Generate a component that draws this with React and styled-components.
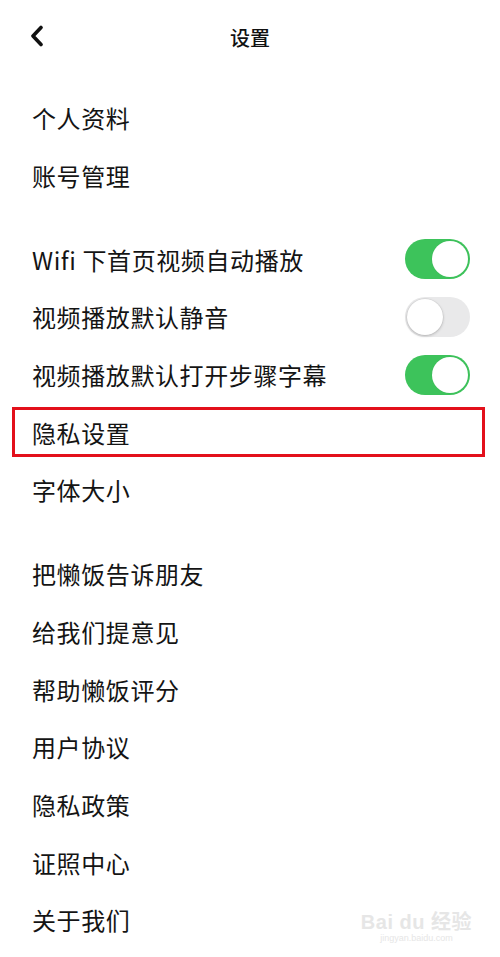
import React from 'react';
import styled, { createGlobalStyle } from 'styled-components';

const Global = createGlobalStyle`
  html, body {
    margin: 0;
    padding: 0;
    background: #fff;
  }
  body {
    font-family: 'Noto Sans CJK SC', 'Noto Sans', sans-serif;
    color: #111;
  }
`;

const Page = styled.div`
  position: relative;
  width: 500px;
  height: 957px;
  overflow: hidden;
  background: #fff;
`;

const Header = styled.div`
  height: 76px;
  display: flex;
  align-items: center;
  justify-content: center;
  position: relative;
`;

const BackButton = styled.div`
  position: absolute;
  left: 26px;
  top: 22px;
  width: 22px;
  height: 28px;
  display: flex;
  align-items: center;
  justify-content: center;
`;

const Title = styled.div`
  font-size: 20px;
  font-weight: 500;
  color: #111;
  margin-top: -1px;
`;

const List = styled.div`
  display: flex;
  flex-direction: column;
  gap: 26px;
  padding-top: 13px;
`;

const Group = styled.div`
  display: flex;
  flex-direction: column;
`;

const Row = styled.div`
  position: relative;
  height: 57.7px;
  display: flex;
  align-items: center;
  justify-content: space-between;
  padding: 0 30px 0 32px;
  font-size: 24px;
  letter-spacing: 0.6px;
  color: #141414;

  ${({ $highlight }) =>
    $highlight &&
    `
    &::after {
      content: '';
      position: absolute;
      left: 12px;
      right: 15px;
      top: 4px;
      bottom: 4px;
      border: 3px solid #e3101b;
    }
  `}
`;

const Toggle = styled.div`
  position: relative;
  width: 65px;
  height: 40px;
  border-radius: 20px;
  box-sizing: border-box;
  background: ${({ $on }) => ($on ? '#3dc35b' : '#e9e9ea')};
  flex-shrink: 0;
`;

const Thumb = styled.div`
  position: absolute;
  top: 2px;
  left: ${({ $on }) => ($on ? '27px' : '2px')};
  width: 36px;
  height: 36px;
  border-radius: 50%;
  background: #fff;
  box-shadow: ${({ $on }) =>
    $on ? '0 0 0 0.5px rgba(0,0,0,0.05)' : '0 1px 3px rgba(0,0,0,0.22), 0 0 0 0.5px rgba(0,0,0,0.08)'};
`;

const Watermark = styled.div`
  position: absolute;
  right: 28px;
  bottom: 14px;
  display: flex;
  flex-direction: column;
  align-items: center;
  color: #e6e6e6;
  font-family: 'Liberation Sans', 'Noto Sans CJK SC', sans-serif;
  pointer-events: none;
`;

const MarkMain = styled.div`
  font-size: 20px;
  font-weight: 700;
  letter-spacing: 0.5px;
`;

const MarkSub = styled.div`
  font-size: 9px;
  margin-top: -2px;
`;

const groups = [
  [{ label: '个人资料' }, { label: '账号管理' }],
  [
    { label: 'Wifi 下首页视频自动播放', toggle: true, on: true },
    { label: '视频播放默认静音', toggle: true, on: false },
    { label: '视频播放默认打开步骤字幕', toggle: true, on: true },
    { label: '隐私设置', highlight: true },
    { label: '字体大小' },
  ],
  [
    { label: '把懒饭告诉朋友' },
    { label: '给我们提意见' },
    { label: '帮助懒饭评分' },
    { label: '用户协议' },
    { label: '隐私政策' },
    { label: '证照中心' },
    { label: '关于我们' },
  ],
];

export default function App() {
  return (
    <Page>
      <Global />
      <Header>
        <BackButton>
          <svg width="14" height="22" viewBox="0 0 14 22">
            <polyline
              points="11,2.5 3,11 11,19.5"
              fill="none"
              stroke="#111"
              strokeWidth="3.6"
              strokeLinecap="round"
              strokeLinejoin="round"
            />
          </svg>
        </BackButton>
        <Title>设置</Title>
      </Header>
      <List>
        {groups.map((items, gi) => (
          <Group key={gi}>
            {items.map((item) => (
              <Row key={item.label} $highlight={item.highlight}>
                <span>{item.label}</span>
                {item.toggle && (
                  <Toggle $on={item.on}>
                    <Thumb $on={item.on} />
                  </Toggle>
                )}
              </Row>
            ))}
          </Group>
        ))}
      </List>
      <Watermark>
        <MarkMain>Bai du 经验</MarkMain>
        <MarkSub>jingyan.baidu.com</MarkSub>
      </Watermark>
    </Page>
  );
}
